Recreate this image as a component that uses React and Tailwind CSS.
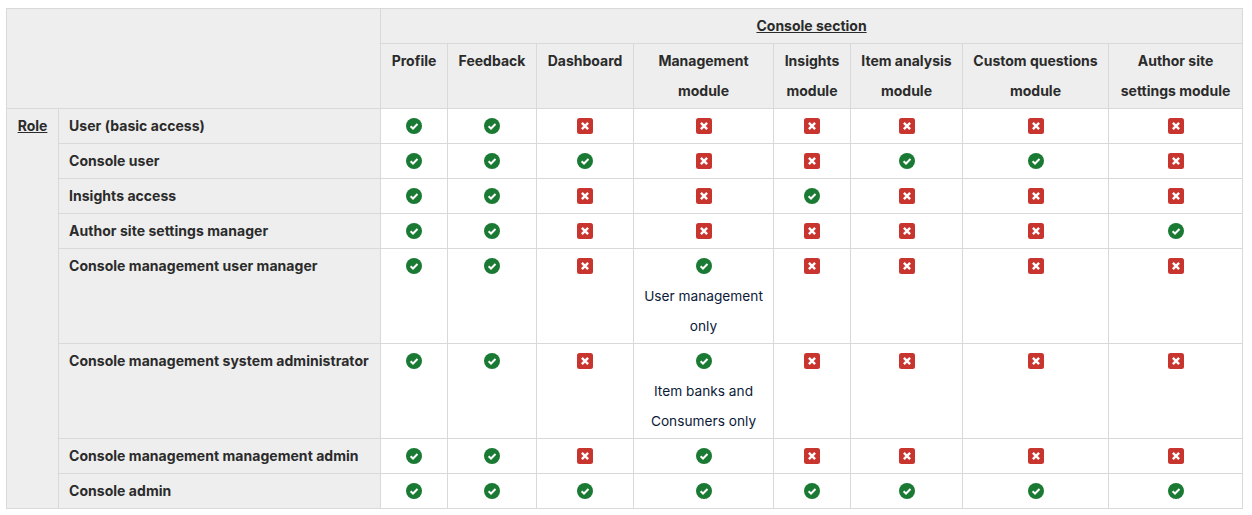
import React from "react";

const columns = [
  { label: ["Profile"], w: "w-[67px]" },
  { label: ["Feedback"], w: "w-[89px]" },
  { label: ["Dashboard"], w: "w-[97px]" },
  { label: ["Management", "module"], w: "w-[140px]" },
  { label: ["Insights", "module"], w: "w-[77px]" },
  { label: ["Item analysis", "module"], w: "w-[112px]" },
  { label: ["Custom questions", "module"], w: "w-[146px]" },
  { label: ["Author site", "settings module"], w: "w-[134px]" },
];

const rows = [
  { role: "User (basic access)", access: [1, 1, 0, 0, 0, 0, 0, 0] },
  { role: "Console user", access: [1, 1, 1, 0, 0, 1, 1, 0] },
  { role: "Insights access", access: [1, 1, 0, 0, 1, 0, 0, 0] },
  { role: "Author site settings manager", access: [1, 1, 0, 0, 0, 0, 0, 1] },
  {
    role: "Console management user manager",
    access: [1, 1, 0, 1, 0, 0, 0, 0],
    note: ["User management", "only"],
  },
  {
    role: "Console management system administrator",
    access: [1, 1, 0, 1, 0, 0, 0, 0],
    note: ["Item banks and", "Consumers only"],
  },
  { role: "Console management management admin", access: [1, 1, 0, 1, 0, 0, 0, 0] },
  { role: "Console admin", access: [1, 1, 1, 1, 1, 1, 1, 1] },
];

const CheckIcon = () => (
  <svg viewBox="0 0 16 16" className="block mx-auto w-4 h-[30px]">
    <circle cx="8" cy="8" r="8" fill="#1a7a33" />
    <path d="M4.6 8.3 7 10.5 11.5 6" fill="none" stroke="#fff" strokeWidth="2" />
  </svg>
);

const CrossIcon = () => (
  <svg viewBox="0 0 16 16" className="block mx-auto w-4 h-[30px]">
    <rect width="16" height="16" rx="2.5" fill="#c8352f" />
    <path d="M4.9 4.9 11.1 11.1M11.1 4.9 4.9 11.1" fill="none" stroke="#fff" strokeWidth="2.4" />
  </svg>
);

const headCell = "border border-[#d9d9d9] bg-[#eeeeee] pt-[2px] pb-[2px] font-bold text-[#2b2b2b]";
const bodyCell = "border border-[#d9d9d9] pt-[2px] pb-[2px] text-center align-top";

const App = () => {
  return (
    <div className="pt-2 pl-1.5 bg-white w-[1252px] h-[515px] overflow-hidden font-['Inter',_sans-serif] text-[14px] leading-[30px] text-[#0b1a38]">
      <table className="table-fixed border-collapse w-[1236px]">
        <colgroup>
          <col className="w-[52px]" />
          <col className="w-[322px]" />
          {columns.map((c) => (
            <col key={c.label[0]} className={c.w} />
          ))}
        </colgroup>
        <thead>
          <tr>
            <th colSpan={2} rowSpan={2} className={headCell}></th>
            <th colSpan={8} className={headCell + " text-center"}>
              <span className="underline">Console section</span>
            </th>
          </tr>
          <tr>
            {columns.map((c) => (
              <th key={c.label[0]} className={headCell + " text-center align-top"}>
                {c.label.map((line) => (
                  <div key={line}>{line}</div>
                ))}
              </th>
            ))}
          </tr>
        </thead>
        <tbody>
          {rows.map((row, i) => (
            <tr key={row.role}>
              {i === 0 && (
                <th rowSpan={rows.length} className={headCell + " text-center align-top"}>
                  <span className="underline">Role</span>
                </th>
              )}
              <th className={headCell + " text-left align-top pl-[10px] pr-0 whitespace-nowrap tracking-[0.04px]"}>{row.role}</th>
              {row.access.map((ok, j) => (
                <td key={j} className={bodyCell}>
                  {ok ? <CheckIcon /> : <CrossIcon />}
                  {j === 3 && row.note && row.note.map((line) => <div key={line} className="text-[13.7px]">{line}</div>)}
                </td>
              ))}
            </tr>
          ))}
        </tbody>
      </table>
    </div>
  );
};

export default App;
